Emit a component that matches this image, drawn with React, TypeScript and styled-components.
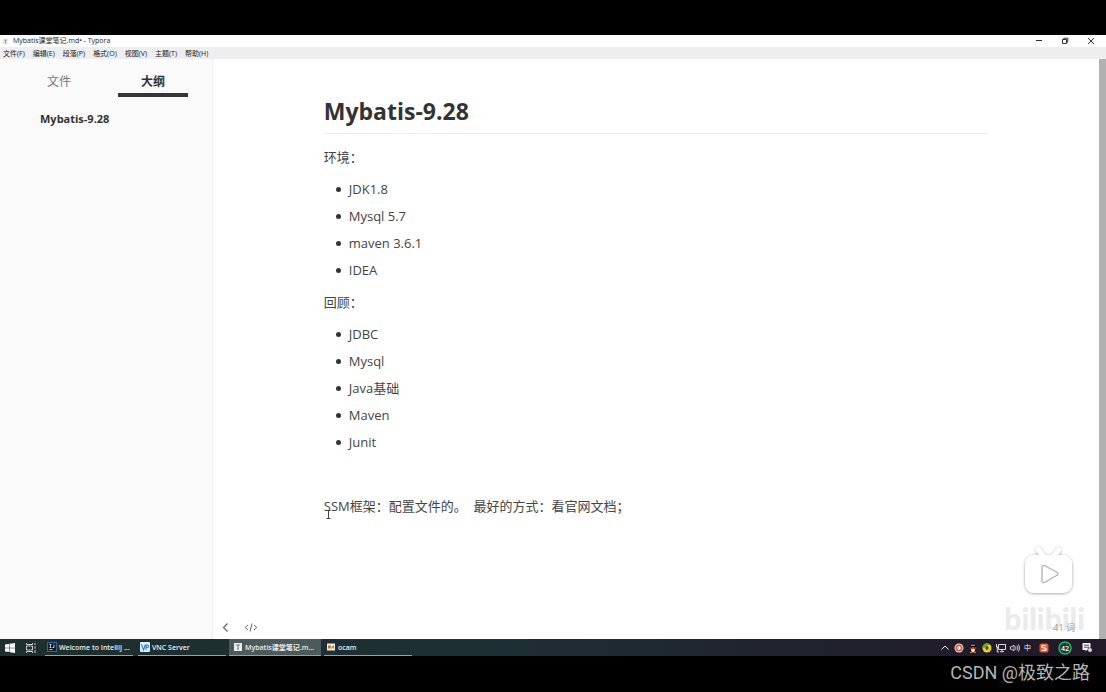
import React from 'react';
import styled, { createGlobalStyle } from 'styled-components';

const GlobalStyle = createGlobalStyle`
  *, *::before, *::after { box-sizing: border-box; }
  body { margin: 0; background: #000; font-family: "Open Sans", "Noto Sans CJK SC", sans-serif; }
  button { font: inherit; color: inherit; border: 0; padding: 0; margin: 0; background: none; cursor: pointer; }
  svg { display: block; flex: none; }
`;

const Screen = styled.div`
  display: flex;
  flex-direction: column;
  min-height: 100vh;
  padding-top: 35px;
`;

const TitleBar = styled.header`
  display: flex;
  align-items: center;
  height: 12px;
  padding: 0 11px 0 2px;
  gap: 4px;
  background: #fff;
  color: #222;
  font-size: 7px;
  line-height: 12px;
`;

const WindowTitle = styled.span`
  flex: 1;
  white-space: pre;
`;

const WindowControls = styled.div`
  display: flex;
  gap: 18px;
`;

const MenuBar = styled.nav`
  display: flex;
  height: 12px;
  padding: 0 3px;
  gap: 8px;
  background: #eee;
  color: #222;
  font-size: 7px;
  line-height: 14px;
  white-space: nowrap;
`;

const Workspace = styled.div`
  display: flex;
  flex: 1;
  background: #fff;
`;

const Sidebar = styled.aside`
  flex: none;
  width: 213px;
  padding: 8px 24px 0;
  background: #fafafa;
  border-right: 1px solid #eee;
`;

const Tabs = styled.div`
  display: grid;
  grid-template-columns: 70px 70px;
  column-gap: 24px;
`;

const Tab = styled.button<{ $active?: boolean }>`
  height: 30px;
  padding-top: 4px;
  font-size: 12px;
  line-height: 22px;
  color: ${(p) => (p.$active ? '#333' : '#777')};
  font-weight: ${(p) => (p.$active ? 700 : 400)};
  border-bottom: 4px solid ${(p) => (p.$active ? '#36363a' : 'transparent')};
`;

const OutlineLink = styled.a`
  display: block;
  margin: 13px 0 0 16px;
  font-size: 11px;
  line-height: 18px;
  font-weight: 700;
  color: #333;
  text-decoration: none;
`;

const Editor = styled.main`
  position: relative;
  display: flex;
  flex: 1;
  flex-direction: column;
  justify-content: space-between;
  border-right: 7px solid #b1b1b1;
`;

const Article = styled.article`
  padding: 34px 12.5% 0;
  color: #444;
  font-size: 13px;
  line-height: 21px;
`;

const Heading = styled.h1`
  margin: 0 0 13px;
  padding-bottom: 4px;
  border-bottom: 1px solid #eee;
  color: #333;
  font-size: 23px;
  line-height: 36px;
  font-weight: 700;
`;

const Paragraph = styled.p`
  margin: 0;
  white-space: pre-wrap;
`;

const BulletList = styled.ul`
  display: flex;
  flex-direction: column;
  gap: 6px;
  margin: 11px 0;
  padding-left: 12px;
  list-style: none;
`;

const BulletItem = styled.li`
  display: flex;
  align-items: center;
  gap: 8px;

  &::before {
    content: "";
    width: 5px;
    height: 5px;
    border-radius: 50%;
    background: #333;
  }
`;

const Closing = styled(Paragraph)`
  margin-top: 43px;
`;

const EditorTools = styled.div`
  display: flex;
  align-items: center;
  gap: 14px;
  height: 24px;
  padding-left: 8px;
  color: #666;
`;

const Watermark = styled.div`
  position: absolute;
  right: 14px;
  bottom: 0;
  display: flex;
  flex-direction: column;
  align-items: flex-end;
`;

const PlayerMark = styled.svg`
  margin-right: 7px;
`;

const Wordmark = styled.span`
  height: 39px;
  color: #ebebeb;
  font: 900 30px/36px Lato, sans-serif;
`;

const WordCount = styled.span`
  position: absolute;
  right: 24px;
  bottom: 4px;
  color: #999;
  font-size: 9px;
  line-height: 14px;
`;

const Pointer = styled.span`
  position: absolute;
  left: 112px;
  top: 451px;
`;

const Taskbar = styled.footer`
  display: flex;
  align-items: center;
  height: 17px;
  background: linear-gradient(90deg, #1d302f 0%, #1d2f34 45%, #211d2d 85%, #211a29 100%);
  color: #eee;
  font-size: 7px;
  line-height: 17px;
`;

const StartButtons = styled.div`
  display: flex;
  gap: 11px;
  width: 45px;
  padding-left: 5px;
`;

const Tasks = styled.div`
  display: flex;
  flex: 1;
  gap: 5px;
`;

const Task = styled.button<{ $active?: boolean }>`
  display: flex;
  align-items: center;
  gap: 2px;
  width: ${(p) => (p.$active ? 92 : 88)}px;
  height: 17px;
  margin: ${(p) => (p.$active ? '0 -2px' : '0')};
  padding-left: ${(p) => (p.$active ? 4 : 2)}px;
  background: ${(p) => (p.$active ? '#4b5a5a' : 'transparent')};
  border-bottom: 1px solid #76a9d5;
  font-weight: 600;
  white-space: nowrap;
`;

const Tray = styled.div`
  display: flex;
  align-items: center;
  gap: 4px;
  padding-right: 13px;
`;

const TrayGroup = styled.div`
  display: flex;
  align-items: center;
  gap: 9px;
  margin-left: 4px;
`;

const Credit = styled.div`
  height: 36px;
  padding-right: 16px;
  color: #b5b5b5;
  background: #000;
  text-align: right;
  font: 18px/34px Roboto, "Noto Sans CJK SC", sans-serif;
`;

const TyporaIcon = ({ size }: { size: number }) => (
  <svg width={size} height={size} viewBox="0 0 10 10">
    <path d="M1 1h8v8H1z" fill="#ececec" />
    <path d="M3 3h4M5 3v4M4 7h2" fill="none" stroke="#777" strokeWidth="1" />
  </svg>
);

const menus = ['文件(F)', '编辑(E)', '段落(P)', '格式(O)', '视图(V)', '主题(T)', '帮助(H)'];
const environment = ['JDK1.8', 'Mysql 5.7', 'maven 3.6.1', 'IDEA'];
const review = ['JDBC', 'Mysql', 'Java基础', 'Maven', 'Junit'];

export default function App() {
  return (
    <Screen>
      <GlobalStyle />
      <TitleBar>
        <TyporaIcon size={7} />
        <WindowTitle>Mybatis课堂笔记.md• - Typora</WindowTitle>
        <WindowControls>
          <button aria-label="Minimize">
            <svg width="8" height="8" viewBox="0 0 8 8"><path d="M1 3.5h6" stroke="#333" /></svg>
          </button>
          <button aria-label="Restore">
            <svg width="8" height="8" viewBox="0 0 8 8" fill="none" stroke="#333">
              <path d="M1.5 2.5h4v4h-4zM2.8 2.5V1.2h4v4H5.5" />
            </svg>
          </button>
          <button aria-label="Close">
            <svg width="8" height="8" viewBox="0 0 8 8"><path d="M1 1l6 6M7 1L1 7" stroke="#333" /></svg>
          </button>
        </WindowControls>
      </TitleBar>
      <MenuBar>
        {menus.map((m) => <button key={m}>{m}</button>)}
      </MenuBar>
      <Workspace>
        <Sidebar>
          <Tabs>
            <Tab>文件</Tab>
            <Tab $active>大纲</Tab>
          </Tabs>
          <OutlineLink href="#mybatis">Mybatis-9.28</OutlineLink>
        </Sidebar>
        <Editor>
          <Article>
            <Heading id="mybatis">Mybatis-9.28</Heading>
            <Paragraph>环境：</Paragraph>
            <BulletList>{environment.map((t) => <BulletItem key={t}>{t}</BulletItem>)}</BulletList>
            <Paragraph>回顾：</Paragraph>
            <BulletList>{review.map((t) => <BulletItem key={t}>{t}</BulletItem>)}</BulletList>
            <Closing>SSM框架：配置文件的。  最好的方式：看官网文档；</Closing>
          </Article>
          <EditorTools>
            <button aria-label="Back">
              <svg width="9" height="11" viewBox="0 0 9 11"><path d="M6.5 1.5l-4 4 4 4" fill="none" stroke="currentColor" strokeWidth="1.2" /></svg>
            </button>
            <button aria-label="Source code">
              <svg width="14" height="11" viewBox="0 0 14 11"><path d="M4 3L1.2 5.5 4 8M10 3l2.8 2.5L10 8M8 1.5l-2 8" fill="none" stroke="currentColor" /></svg>
            </button>
          </EditorTools>
          <Pointer>
            <svg width="7" height="9" viewBox="0 0 7 9"><path d="M1.5.5h4M3.5.5v8M1.5 8.5h4" stroke="#444" strokeWidth="1" /></svg>
          </Pointer>
          <Watermark>
            <PlayerMark width="60" height="56" viewBox="0 0 60 56">
              <defs>
                <filter id="soft" x="-20%" y="-20%" width="140%" height="150%">
                  <feDropShadow dx="0" dy="0.6" stdDeviation="1.5" floodColor="#000" floodOpacity=".4" />
                </filter>
              </defs>
              <g filter="url(#soft)">
                <path d="M20.5 6l4.5 6M40.5 6L36 12" stroke="#fff" strokeWidth="5" strokeLinecap="round" />
                <rect x="7" y="11" width="47" height="38" rx="9" fill="#fff" />
              </g>
              <path d="M24 24q0-4 3.5-2l11 6q3 2 0 3.5L27.5 38q-3.5 2-3.5-2z" fill="#fff" stroke="#b5b5b5" strokeWidth="1.4" />
            </PlayerMark>
            <Wordmark>bilibili</Wordmark>
          </Watermark>
          <WordCount>41 词</WordCount>
        </Editor>
      </Workspace>
      <Taskbar>
        <StartButtons>
          <button aria-label="Start">
            <svg width="10" height="10" viewBox="0 0 10 10" fill="#fff"><path d="M0 1.4L4.5.8v3.9H0zM5 .7L10 0v4.7H5zM0 5.2h4.5v3.9L0 8.500zM5 5.2h5V10l-5-.7z" /></svg>
          </button>
          <button aria-label="Task view">
            <svg width="10" height="10" viewBox="0 0 10 10" fill="none" stroke="#ddd"><path d="M.5 3h6v4h-6zM.5 0v1.5h6V0M.5 10V8.500h6V10M9 0v2M9 3.200v2.500M9 7v3" strokeWidth=".9" /></svg>
          </button>
        </StartButtons>
        <Tasks>
          <Task>
            <svg width="10" height="10" viewBox="0 0 10 10"><path d="M0 0h10v10H0z" fill="#2368b5" /><path d="M1.200 1.200h7.600v7.600H1.200z" fill="#111" /><path d="M2.500 2.500h2M3.500 2.500v3M2.500 5.500h2M7 2.500v3H5.500M2.500 7.500h3" fill="none" stroke="#eee" strokeWidth=".8" /></svg>
            Welcome to IntelliJ ...
          </Task>
          <Task>
            <svg width="10" height="10" viewBox="0 0 10 10"><rect width="10" height="10" rx="1" fill="#dceeff" /><path d="M1.500 2.500L3.500 8l2-5.500M6 8V3h1.500q1.200 0 1.200 1.200T7.500 5.500H6" fill="none" stroke="#2f7ed0" strokeWidth="1.1" /></svg>
            VNC Server
          </Task>
          <Task $active>
            <TyporaIcon size={10} />
            Mybatis课堂笔记.m...
          </Task>
          <Task>
            <svg width="10" height="10" viewBox="0 0 10 10"><path d="M1 1.500h8v7H1z" fill="#f5eee6" /><path d="M2 3.500h3v3H2zM5.500 5L8 3v4z" fill="#dd6a2c" /></svg>
            ocam
          </Task>
        </Tasks>
        <Tray>
          <svg width="10" height="10" viewBox="0 0 10 10"><path d="M1.500 6.500L5 3l3.500 3.500" fill="none" stroke="#eee" /></svg>
          <svg width="10" height="10" viewBox="0 0 10 10"><circle cx="5" cy="5" r="4.5" fill="#f3e7e3" /><circle cx="5" cy="5" r="2.7" fill="none" stroke="#d74a32" strokeWidth="1.6" /></svg>
          <svg width="10" height="10" viewBox="0 0 10 10"><ellipse cx="5" cy="5" rx="3.3" ry="4.5" fill="#0c0c0c" /><ellipse cx="5" cy="6.7" rx="2" ry="2.3" fill="#fff" /><path d="M1.700 4.800q3.300 1.800 6.600 0" fill="none" stroke="#e23b2d" strokeWidth="1.3" /><circle cx="4" cy="2.3" r=".7" fill="#fff" /><circle cx="6" cy="2.3" r=".7" fill="#fff" /><path d="M2 9.300h2.500M5.500 9.300H8" stroke="#f0a22b" /></svg>
          <svg width="10" height="10" viewBox="0 0 10 10"><circle cx="5" cy="5" r="4.5" fill="#f0cf22" /><path d="M.5 5a4.500 4.500 0 0 1 8-3Q5 1 4.500 4z" fill="#58ad35" /><path d="M5 3v4M3 5h4" stroke="#333" strokeWidth="1.2" /></svg>
          <svg width="10" height="10" viewBox="0 0 10 10" fill="none" stroke="#eee" strokeWidth=".9"><path d="M2.500 1.500h7v5h-7zM6 6.500v2M4 8.700h4M.5 1v3h2M1.300 4v5H3" /></svg>
          <svg width="10" height="10" viewBox="0 0 10 10" fill="none" stroke="#eee" strokeWidth=".8"><path d="M.5 3.700H2L4 2v6L2 6.300H.5zM5.500 3.500q1 1.500 0 3M7 2.500q1.700 2.500 0 5M8.500 1.500q2.200 3.500 0 7" /></svg>
          <span>中</span>
          <TrayGroup>
            <svg width="10" height="10" viewBox="0 0 10 10"><rect x=".5" y=".5" width="9" height="9" rx="2" fill="#ed5422" /><path d="M7.200 2.800q-4.400-1-4.400.7 0 1 2.200 1.400 2.400.4 2.300 1.500-.2 1.700-4.600.7" fill="none" stroke="#fff" strokeWidth="1.3" /></svg>
            <svg width="14" height="14" viewBox="0 0 14 14"><circle cx="7" cy="7" r="6" fill="#183d37" stroke="#20b577" strokeWidth="1.5" /><text x="7" y="9.5" textAnchor="middle" fontSize="7" fontWeight="600" fill="#fff">42</text></svg>
            <svg width="12" height="11" viewBox="0 0 12 11"><path d="M1.500 1h8v7H6L4.500 9.500V8h-3z" fill="#eee" /><path d="M3 3.200h5M3 5.200h5" stroke="#333" strokeWidth=".8" /><circle cx="9" cy="8" r="2.3" fill="#ddd" stroke="#222" strokeWidth=".6" /></svg>
          </TrayGroup>
        </Tray>
      </Taskbar>
      <Credit>CSDN @极致之路</Credit>
    </Screen>
  );
}
